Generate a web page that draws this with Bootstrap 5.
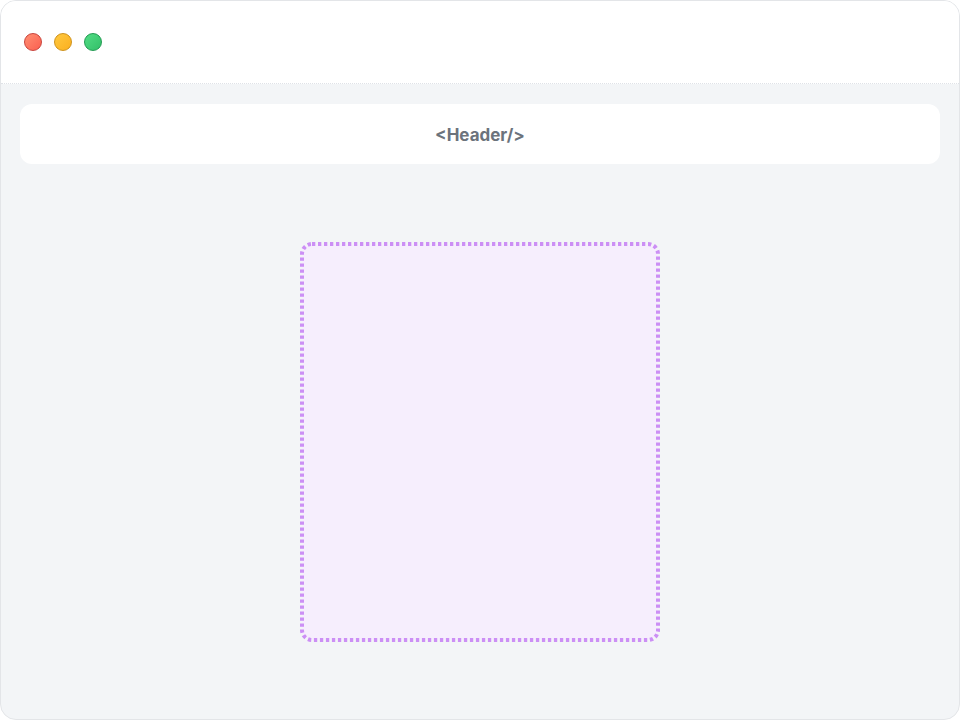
<!DOCTYPE html>
<html lang="en">
<head>
  <meta charset="UTF-8">
  <title>Layout</title>
  <link href="https://cdn.jsdelivr.net/npm/bootstrap@5.3.3/dist/css/bootstrap.min.css" rel="stylesheet">
  <style>
    html, body { height: 100%; background: #fff; }
    .app-window {
      height: 720px;
      background: #f3f5f7;
      border: 1px solid #e3e5e8;
      border-radius: 16px;
      overflow: hidden;
    }
    .title-bar {
      height: 83px;
      padding-left: 23px;
      background: #fff;
      border-bottom: 1px dotted #dfe2e7;
    }
    .dot-group { gap: 12px; }
    .dot { width: 18px; height: 18px; border-radius: 50%; border: 1px solid; }
    .dot-red { background: linear-gradient(135deg, #ff8f73, #fb5f50); border-color: #c9423a; }
    .dot-yellow { background: linear-gradient(135deg, #ffc940, #fbaf1f); border-color: #cf9118; }
    .dot-green { background: linear-gradient(135deg, #52dd85, #33bf68); border-color: #1f9a50; }
    .page-body { padding: 20px 19px 0; }
    .header-box {
      height: 60px;
      padding-top: 3px;
      border-radius: 12px;
      font-family: Inter, "Liberation Sans", sans-serif;
      font-size: 17px;
      font-weight: 700;
      color: #6c737c;
    }
    .dotted-box {
      width: 360px;
      height: 400px;
      margin-top: 78px;
    }
    .dotted-box svg { display: block; }
    .dotted-box rect {
      fill: #f6eefd;
      stroke: #cc8ff5;
      stroke-width: 4;
      stroke-dasharray: 3.3 2.7;
    }
  </style>
</head>
<body>
  <div class="app-window">
    <div class="title-bar d-flex align-items-center">
      <div class="dot-group d-flex">
        <span class="dot dot-red"></span>
        <span class="dot dot-yellow"></span>
        <span class="dot dot-green"></span>
      </div>
    </div>
    <div class="page-body">
      <div class="header-box bg-white d-flex align-items-center justify-content-center">&lt;Header/&gt;</div>
      <div class="dotted-box mx-auto">
        <svg width="360" height="400" viewBox="0 0 360 400"><rect x="2" y="2" width="356" height="396" rx="10" ry="10"/></svg>
      </div>
    </div>
  </div>
  <script src="https://cdn.jsdelivr.net/npm/bootstrap@5.3.3/dist/js/bootstrap.bundle.min.js"></script>
</body>
</html>
